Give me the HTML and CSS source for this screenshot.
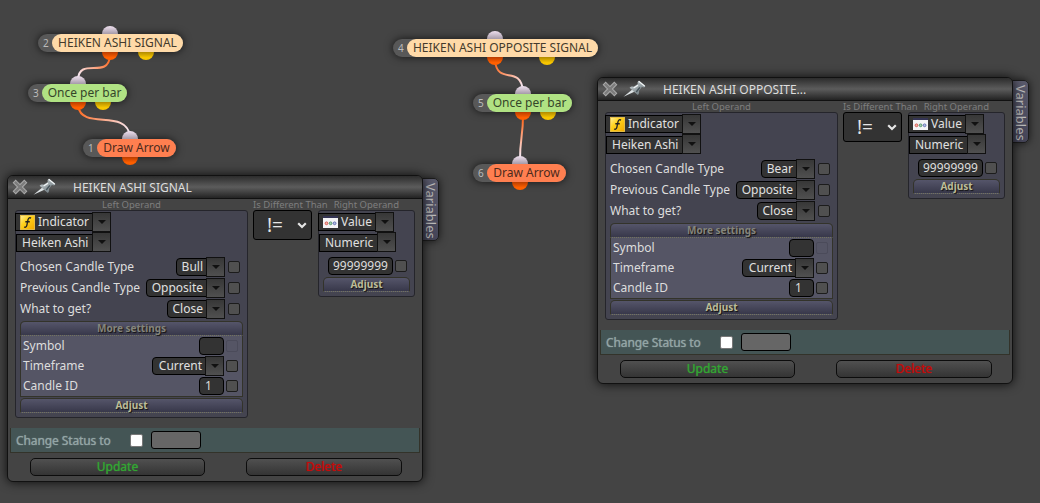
FILE: index.html
```html
<!DOCTYPE html>
<html lang="en">
<head>
    <meta charset="UTF-8">
    <title>Strategy blocks</title>
    <link rel="stylesheet" href="styles.css">
</head>
<body>
    <svg class="defs" width="0" height="0">
        <defs>
            <linearGradient id="pinFill" x1="0" y1="0" x2="1" y2="1">
                <stop offset="0" stop-color="#d5dde0"/>
                <stop offset="1" stop-color="#59656a"/>
            </linearGradient>
            <linearGradient id="yellowFill" x1="0" y1="0" x2="1" y2="1">
                <stop offset="0" stop-color="#fff0a0"/>
                <stop offset="0.4" stop-color="#ffd21c"/>
                <stop offset="1" stop-color="#f0a800"/>
            </linearGradient>
            <symbol id="close" viewBox="0 0 16 16">
                <path d="M3.700 3.700 12.300 12.300M12.300 3.700 3.700 12.300" stroke="#aaa" stroke-width="4.400" stroke-linecap="square" fill="none"/>
                <path d="M3.700 3.700 12.300 12.300M12.300 3.700 3.700 12.300" stroke="#7c7c7c" stroke-width="2.400" stroke-linecap="square" fill="none"/>
            </symbol>
            <symbol id="pin" viewBox="0 0 24 18">
                <path d="M.5 16.800 9.300 9.600l2 2.200z" fill="#dde3e5"/>
                <path d="M6.600 7.800c1-1.200 2.600-1.500 4.200-1.100l4-2.700c-.5-1.300-.2-2.600.8-3.300l6.900 5.900c-.9 1-2.300 1.100-3.600.5l-2.900 3.700c.4 1.600 0 3.400-1.200 4.300z" fill="url(#pinFill)"/>
                <path d="M10.600 8 15 5.200M15.800 1.200l6 5" stroke="#f2f6f7" stroke-width="1.300" fill="none"/>
                <path d="m13.200 12 3.700-4.600" stroke="#46535a" stroke-width="1.400"/>
            </symbol>
            <symbol id="func" viewBox="0 0 16 16">
                <rect x=".5" y=".5" width="15" height="15" fill="url(#yellowFill)" stroke="#e8c04a"/>
                <path d="M11.800 3.300c-1.800-1-2.900 0-3.300 2L7.300 11c-.4 1.900-1.400 2.500-2.900 1.800M5.700 7.200h4.700" stroke="#222" stroke-width="1.400" fill="none"/>
            </symbol>
            <symbol id="value" viewBox="0 0 15 12">
                <rect x="0" y="0" width="15" height="12" fill="#f4f4f6"/>
                <rect x="0" y="0" width="15" height="2" fill="#343454"/>
                <circle cx="3.500" cy="7.300" r="1.400" fill="#f2b5ad" stroke="#d0443a" stroke-width=".8"/>
                <circle cx="7.600" cy="7.300" r="1.400" fill="#a5d0b0" stroke="#3f8a60" stroke-width=".8"/>
                <circle cx="11.600" cy="7.300" r="1.400" fill="#b5bfe5" stroke="#5261a8" stroke-width=".8"/>
            </symbol>
        </defs>
    </svg>

    <div class="canvas">
        <svg class="wires" width="1040" height="503">
            <defs>
                <linearGradient id="w1" gradientUnits="userSpaceOnUse" x1="110" y1="60" x2="78" y2="77"><stop offset="0" stop-color="#ff6a20"/><stop offset="1" stop-color="#f8ecf8"/></linearGradient>
                <linearGradient id="w2" gradientUnits="userSpaceOnUse" x1="78" y1="110" x2="130" y2="132"><stop offset="0" stop-color="#ff6a20"/><stop offset="1" stop-color="#f8ecf8"/></linearGradient>
                <linearGradient id="w3" gradientUnits="userSpaceOnUse" x1="495" y1="65" x2="523" y2="87"><stop offset="0" stop-color="#ff6a20"/><stop offset="1" stop-color="#f8ecf8"/></linearGradient>
                <linearGradient id="w4" gradientUnits="userSpaceOnUse" x1="523" y1="120" x2="520" y2="157"><stop offset="0" stop-color="#ff6a20"/><stop offset="1" stop-color="#f8ecf8"/></linearGradient>
            </defs>
            <path d="M110 56C108 80 79 56 78 80" stroke="url(#w1)"/>
            <path d="M78 106C82 131 126 108 130 136" stroke="url(#w2)"/>
            <path d="M495 61C498 86 520 64 523 91" stroke="url(#w3)"/>
            <path d="M523 116C523 136 520 138 520 160" stroke="url(#w4)"/>
        </svg>

        <div class="node n2">
            <span class="port in"></span><span class="port out"></span><span class="port alt"></span>
            <span class="num">2</span><span class="name sand">HEIKEN ASHI SIGNAL</span>
        </div>
        <div class="node n3">
            <span class="port in"></span><span class="port out"></span><span class="port alt"></span>
            <span class="num">3</span><span class="name green">Once per bar</span>
        </div>
        <div class="node n1">
            <span class="port in"></span><span class="port out"></span>
            <span class="num">1</span><span class="name coral">Draw Arrow</span>
        </div>
        <div class="node n4">
            <span class="port in"></span><span class="port out"></span><span class="port alt"></span>
            <span class="num">4</span><span class="name sand">HEIKEN ASHI OPPOSITE SIGNAL</span>
        </div>
        <div class="node n5">
            <span class="port in"></span><span class="port out"></span><span class="port alt"></span>
            <span class="num">5</span><span class="name green">Once per bar</span>
        </div>
        <div class="node n6">
            <span class="port in"></span><span class="port out"></span>
            <span class="num">6</span><span class="name coral">Draw Arrow</span>
        </div>

        <div class="window win1">
            <div class="tab">Variables</div>
            <div class="panel">
                <div class="bar">
                    <svg class="x" width="16" height="16"><use href="#close"/></svg>
                    <svg class="pin" width="24" height="18"><use href="#pin"/></svg>
                    <span class="title">HEIKEN ASHI SIGNAL</span>
                </div>
                <div class="operands">
                    <div class="col left">
                        <div class="caption">Left Operand</div>
                        <div class="box">
                            <div class="select first"><span class="val"><svg width="15" height="15"><use href="#func"/></svg>Indicator</span><i class="arrow"></i></div>
                            <div class="select second"><span class="val">Heiken Ashi</span><i class="arrow"></i></div>
                            <div class="params">
                                <div class="row"><label>Chosen Candle Type</label><div class="select"><span class="val">Bull</span><i class="arrow"></i></div><i class="check"></i></div>
                                <div class="row"><label>Previous Candle Type</label><div class="select"><span class="val">Opposite</span><i class="arrow"></i></div><i class="check"></i></div>
                                <div class="row"><label>What to get?</label><div class="select"><span class="val">Close</span><i class="arrow"></i></div><i class="check"></i></div>
                            </div>
                            <div class="more">
                                <div class="strip dim">More settings</div>
                                <div class="row"><label>Symbol</label><span class="field"></span><i class="check off"></i></div>
                                <div class="row"><label>Timeframe</label><div class="select"><span class="val">Current</span><i class="arrow"></i></div><i class="check"></i></div>
                                <div class="row"><label>Candle ID</label><span class="field">1</span><i class="check"></i></div>
                            </div>
                            <div class="strip">Adjust</div>
                        </div>
                    </div>
                    <div class="col middle">
                        <div class="caption">Is Different Than</div>
                        <div class="compare"><span>!=</span><svg width="10" height="7" viewBox="0 0 10 7"><path d="M1.200 1.300 5 5l3.800-3.700" fill="none" stroke="#e6e6e6" stroke-width="2.200"/></svg></div>
                    </div>
                    <div class="col right">
                        <div class="caption">Right Operand</div>
                        <div class="box">
                            <div class="select first"><span class="val"><svg width="15" height="12"><use href="#value"/></svg>Value</span><i class="arrow"></i></div>
                            <div class="select second"><span class="val">Numeric</span><i class="arrow"></i></div>
                            <div class="amount"><span class="field">99999999</span><i class="check"></i></div>
                            <div class="strip">Adjust</div>
                        </div>
                    </div>
                </div>
                <div class="status"><label>Change Status to</label><i class="tick"></i><span class="blank"></span></div>
                <div class="actions"><button class="update">Update</button><button class="delete">Delete</button></div>
            </div>
        </div>

        <div class="window win2">
            <div class="tab">Variables</div>
            <div class="panel">
                <div class="bar">
                    <svg class="x" width="16" height="16"><use href="#close"/></svg>
                    <svg class="pin" width="24" height="18"><use href="#pin"/></svg>
                    <span class="title">HEIKEN ASHI OPPOSITE...</span>
                </div>
                <div class="operands">
                    <div class="col left">
                        <div class="caption">Left Operand</div>
                        <div class="box">
                            <div class="select first"><span class="val"><svg width="15" height="15"><use href="#func"/></svg>Indicator</span><i class="arrow"></i></div>
                            <div class="select second"><span class="val">Heiken Ashi</span><i class="arrow"></i></div>
                            <div class="params">
                                <div class="row"><label>Chosen Candle Type</label><div class="select"><span class="val">Bear</span><i class="arrow"></i></div><i class="check"></i></div>
                                <div class="row"><label>Previous Candle Type</label><div class="select"><span class="val">Opposite</span><i class="arrow"></i></div><i class="check"></i></div>
                                <div class="row"><label>What to get?</label><div class="select"><span class="val">Close</span><i class="arrow"></i></div><i class="check"></i></div>
                            </div>
                            <div class="more">
                                <div class="strip dim">More settings</div>
                                <div class="row"><label>Symbol</label><span class="field"></span><i class="check off"></i></div>
                                <div class="row"><label>Timeframe</label><div class="select"><span class="val">Current</span><i class="arrow"></i></div><i class="check"></i></div>
                                <div class="row"><label>Candle ID</label><span class="field">1</span><i class="check"></i></div>
                            </div>
                            <div class="strip">Adjust</div>
                        </div>
                    </div>
                    <div class="col middle">
                        <div class="caption">Is Different Than</div>
                        <div class="compare"><span>!=</span><svg width="10" height="7" viewBox="0 0 10 7"><path d="M1.200 1.300 5 5l3.800-3.700" fill="none" stroke="#e6e6e6" stroke-width="2.200"/></svg></div>
                    </div>
                    <div class="col right">
                        <div class="caption">Right Operand</div>
                        <div class="box">
                            <div class="select first"><span class="val"><svg width="15" height="12"><use href="#value"/></svg>Value</span><i class="arrow"></i></div>
                            <div class="select second"><span class="val">Numeric</span><i class="arrow"></i></div>
                            <div class="amount"><span class="field">99999999</span><i class="check"></i></div>
                            <div class="strip">Adjust</div>
                        </div>
                    </div>
                </div>
                <div class="status"><label>Change Status to</label><i class="tick"></i><span class="blank"></span></div>
                <div class="actions"><button class="update">Update</button><button class="delete">Delete</button></div>
            </div>
        </div>
    </div>
</body>
</html>
```
FILE: styles.css
```css
* {
    box-sizing: border-box;
}
body {
    margin: 0;
    background: #444;
    font-family: "Noto Sans", sans-serif;
    font-size: 12px;
    color: #ddd;
    overflow: hidden;
}
.defs {
    position: absolute;
}
.canvas {
    position: relative;
    width: 1040px;
    height: 503px;
    white-space: nowrap;
}
.wires {
    position: absolute;
    left: 0;
    top: 0;
}
.wires path {
    fill: none;
    stroke-width: 2;
}

/* blocks */
.node {
    position: absolute;
    display: flex;
    height: 18px;
    line-height: 18px;
    border-radius: 9px;
    background: #585858;
    box-shadow: 0 0 8px rgba(0,0,0,0.7);
}
.num {
    position: relative;
    width: 14px;
    padding-left: 5px;
    font-size: 10px;
    color: #bbb;
}
.name {
    position: relative;
    flex: 1;
    border-radius: 9px;
    text-align: center;
    color: #443a2c;
}
.sand { background: #ffdaa8; }
.green { background: #b0e283; color: #35462a; }
.coral { background: #ff7f50; color: #4c2a1c; }
.port {
    position: absolute;
    width: 16px;
    height: 16px;
    border-radius: 50%;
}
.in {
    top: -8px;
    background: linear-gradient(#efe0ef, #a59aa8 50%);
}
.out {
    top: 10px;
    background: linear-gradient(#b83c00 50%, #ff6000 85%);
}
.alt {
    top: 10px;
    background: linear-gradient(#b08a00 50%, #f7c600 85%);
}
.n2 { left: 38px; top: 34px; width: 145px; }
.n2 .port { left: 64px; }
.n2 .alt { left: 100px; }
.n3 { left: 28px; top: 84px; width: 99px; }
.n3 .port { left: 42px; }
.n3 .alt { left: 67px; }
.n1 { left: 83px; top: 139px; width: 93px; }
.n1 .port { left: 39px; }
.n4 { left: 393px; top: 39px; width: 205px; }
.n4 .port { left: 94px; }
.n4 .alt { left: 146px; }
.n5 { left: 473px; top: 94px; width: 99px; }
.n5 .port { left: 42px; }
.n5 .alt { left: 67px; }
.n6 { left: 473px; top: 164px; width: 93px; }
.n6 .port { left: 39px; }

/* block windows */
.window {
    position: absolute;
    width: 416px;
    height: 307px;
}
.win1 { left: 7px; top: 175px; }
.win2 { left: 597px; top: 77px; }
.panel {
    position: relative;
    height: 307px;
    border: 1px solid #111;
    border-radius: 6px;
    background: #444;
    box-shadow: 0 0 11px rgba(0,0,0,0.85);
}
.tab {
    position: absolute;
    left: 415px;
    top: 3px;
    width: 17px;
    height: 63px;
    padding-top: 4px;
    border: 1px solid #1c1c1c;
    border-radius: 0 5px 5px 0;
    background: linear-gradient(#5a5a6c, #454558);
    box-shadow: 0 0 8px rgba(0,0,0,0.7);
    writing-mode: vertical-rl;
    font-size: 13px;
    line-height: 15px;
    color: #bbb;
}
.bar {
    display: flex;
    align-items: center;
    height: 23px;
    padding-left: 4px;
    border-bottom: 1px solid #111;
    border-radius: 5px 5px 0 0;
    background: linear-gradient(#2c2c2c, #5c5c5c 50%, #232323);
}
.pin {
    margin-left: 5px;
}
.title {
    margin-left: 16px;
}
.operands {
    display: flex;
    gap: 5px;
    height: 229px;
    padding-left: 7px;
}
.caption {
    height: 11px;
    font-size: 9.500px;
    line-height: 12px;
    text-align: center;
    color: #7e7e7e;
}
.left { width: 233px; }
.middle { width: 60px; }
.right { width: 97px; }
.middle .caption { text-align: left; }
.right .caption { text-align: right; padding-right: 16px; }
.box {
    border: 1px solid #25252b;
    border-radius: 3px;
    background: #444450;
}
.left .box {
    height: 208px;
    padding: 1px 4px;
}
.right .box {
    height: 87px;
    padding: 1px 4px;
}
.compare {
    display: flex;
    align-items: center;
    justify-content: space-between;
    width: 59px;
    height: 30px;
    padding: 0 4px 0 13px;
    border: 1px solid #000;
    border-radius: 3px;
    background: #333;
    font-size: 19px;
    line-height: 26px;
    color: #e6e6e6;
}
.select {
    display: flex;
    align-items: center;
    height: 20px;
}
.val, .field {
    display: flex;
    align-items: center;
    height: 18px;
    border: 1px solid #000;
    background: #333;
    line-height: 16px;
}
.val {
    padding: 0 3px 0 5px;
    border-radius: 4px 0 0 4px;
    color: #e0e0e0;
}
.arrow {
    width: 19px;
    height: 20px;
    margin-left: -1px;
    border: 1px solid #111;
    background: linear-gradient(#373737, #505050);
}
.arrow::before {
    content: "";
    display: block;
    margin: 7px auto 0;
    width: 0;
    border: 4px solid transparent;
    border-top-color: #111;
    border-bottom: 0;
}
.first, .second {
    margin-left: -5px;
}
.second {
    margin-left: -4px;
}
.first .val, .second .val {
    border-radius: 0;
}
.second .val {
    margin-top: 2px;
}
.first .val {
    padding-left: 4px;
    gap: 3px;
}
.left .first .val { width: 78px; }
.left .second .val { width: 77px; }
.right .first .val { width: 58px; }
.right .second .val { width: 59px; }
.params {
    margin-top: 4px;
}
.row {
    display: flex;
    align-items: center;
    height: 21px;
    padding-right: 3px;
}
.row label {
    flex: 1;
}
.check {
    width: 12px;
    height: 12px;
    margin-left: 3px;
    border: 1px solid #1c1c1c;
    border-radius: 2px;
    background: #505050;
}
.off {
    border-color: #4b4b5a;
    background: #555565;
}
.more {
    height: 76px;
    margin-top: 2px;
    border: 1px solid #33332a;
    border-top: 0;
    border-radius: 5px 5px 0 0;
    background: #555565;
}
.strip {
    height: 15px;
    margin-top: 1px;
    border: 1px solid #33332a;
    border-bottom: 1px dotted #73735c;
    border-radius: 5px 5px 0 0;
    background: linear-gradient(#55556a, #38384a);
    font-size: 10px;
    font-weight: bold;
    line-height: 13px;
    text-align: center;
    color: #bcbc98;
    text-shadow: 1px 1px 1px #111;
}
.right .strip {
    margin-top: 2px;
}
.dim {
    margin: 0 -1px;
    color: #85857c;
}
.more .row {
    height: 20px;
    padding: 0 4px 0 2px;
}
.more label {
    padding-bottom: 2px;
}
.more .val {
    padding-left: 6px;
}
.more .field {
    width: 25px;
    padding-left: 5px;
    border-radius: 4px;
}
.more .check {
    margin-left: 2px;
}
.amount {
    display: flex;
    align-items: center;
    gap: 2px;
    margin: 5px 0 0 5px;
    height: 18px;
}
.amount .field {
    padding: 0 4px;
    width: 65px;
    border-radius: 4px;
}
.amount .check {
    margin: 0;
}
.status {
    display: flex;
    align-items: center;
    height: 25px;
    margin: 0 2px;
    padding-left: 5px;
    border: solid #33332a;
    border-width: 0 1px 1px;
    background: #445555;
}
.status label {
    width: 114px;
    color: #93a5a5;
    letter-spacing: -0.1px;
    text-shadow: 0 0 1px #93a5a5;
}
.tick {
    width: 13px;
    height: 13px;
    border: 1px solid #777;
    border-radius: 2px;
    background: #fff;
}
.blank {
    width: 50px;
    height: 18px;
    margin-left: 8px;
    border: 1px solid #000;
    border-radius: 3px;
    background: #666;
}
.actions {
    display: flex;
    gap: 41px;
    padding: 5px 0 0 22px;
}
.actions button {
    height: 18px;
    padding: 0;
    border: 1px solid #0c0c0c;
    border-radius: 5px;
    background: linear-gradient(#505050, #343434);
    font: 12px/16px "Noto Sans", sans-serif;
    text-shadow: 0 0 1px currentColor;
}
.actions .update { width: 175px; color: #33a533; }
.actions .delete { width: 156px; color: #c40b0b; }
```
